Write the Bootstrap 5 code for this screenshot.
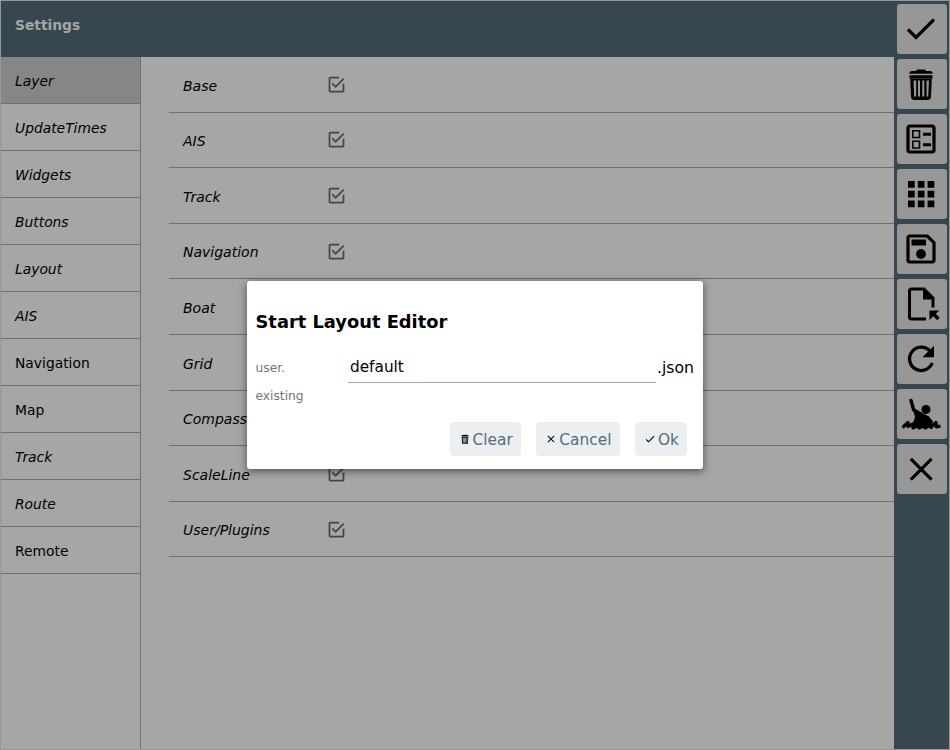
<!DOCTYPE html>
<html lang="en">
<head>
<meta charset="utf-8">
<title>Settings</title>
<meta name="viewport" content="width=device-width, initial-scale=1">
<link href="https://cdn.jsdelivr.net/npm/bootstrap@5.3.0/dist/css/bootstrap.min.css" rel="stylesheet">
<style>
body{font-family:"DejaVu Sans",sans-serif;font-size:14px;line-height:20px;color:#000;background:#979797}
.app{height:750px;padding:1px}
.bar{height:56px;background:#37474f;color:#a6a6a6;padding:14px;font-size:13.800px}
.main-col{background:#a6a6a6}
.side{width:140px;border-right:1px solid #6f6f6f;font-size:13.850px}
.side a{height:47px;padding:2px 14px 0;border-bottom:1px solid #6f6f6f;color:#000;text-decoration:none}
.side a.current{background:#868686}
.layers{margin-left:28px}
.layer-row{height:55.6px;border-bottom:1px solid #6f6f6f;padding-left:14px}
.layer-row span{width:143px;padding-top:2.500px}
.layer-row svg{width:21px;height:21px;fill:#454545}
.tools{width:55px;background:#37474f;padding:3px 2px 0 3px;gap:5px}
.tools button{width:50px;height:50px;border:0;border-radius:3px;background:#979797;padding:0 2px 1px 0}
.tools svg{width:40px;height:40px;display:block;margin:auto}
.ico{fill:#000}
.shade{z-index:5}
.dlg{width:456px;height:188px;background:#fff;border-radius:3px;box-shadow:0 2px 8px rgba(0,0,0,.55);padding:28px 8.500px 0}
.dlg h3{font-size:17.850px;line-height:26px;margin:0 0 19px}
.lbl{font-size:12.25px;color:#757575;width:92.500px}
.row-name .lbl,.row-name .big{margin-top:-1px}
.name-in{width:308px;height:29px;border:0;border-bottom:1px solid #a6a6a6;border-radius:0;padding:0 2px 3px;font-size:15.300px;color:#000;outline:0}
.big{font-size:15.700px;padding-left:1px}
.existing{margin-top:3px}
.actions{gap:15px;padding-right:7.500px;margin-top:16px}
.act{height:34px;border:0;border-radius:4px;background:#eceff1;color:#546e7a;font-size:15.400px;padding:2px 8px 0 9px}
.act.wide{padding-right:8.500px}
.act svg{width:12px;height:12px;margin:0 2px 2px 0}
</style>
<script src="https://cdn.jsdelivr.net/npm/bootstrap@5.3.0/dist/js/bootstrap.bundle.min.js"></script>
</head>
<body>
<svg class="d-none">
<symbol id="check" viewBox="0 0 24 24"><path d="M9 16.2 4.8 12l-1.4 1.4L9 19 21 7l-1.4-1.4z"/></symbol>
<symbol id="close" viewBox="0 0 24 24"><path d="M19 6.4 17.6 5 12 10.6 6.4 5 5 6.4 10.6 12 5 17.6 6.4 19 12 13.4 17.6 19 19 17.6 13.4 12z"/></symbol>
<symbol id="trash" viewBox="0 0 40 40"><path d="M8.500 9.800V8l2-1h4.500l1-1.500h8l1 1.500h4.500l2 1v1.800zM8.500 11.300h23v3.200h-23z"/><path fill-rule="evenodd" d="M9.200 14.500h21.600l-.8 18.500q-.3 3-3.300 3H13.300q-3 0-3.300-3zM12.500 16.500l.7 16h2v-16zM17 16.500v16h2v-16zM21.300 16.500v16h2v-16zM25.600 16.500v16h1.600l.7-16z"/></symbol>
<symbol id="box" viewBox="0 0 24 24"><path d="M19 19H5V5h10V3H5c-1.100 0-2 .9-2 2v14c0 1.100.9 2 2 2h14c1.100 0 2-.9 2-2v-8h-2zM7.900 10.100 6.500 11.500 11 16 21 6l-1.400-1.400L11 13.200z"/></symbol>
</svg>
<div class="app d-flex position-relative">
  <div class="main-col d-flex flex-column flex-grow-1">
    <header class="bar fw-bold">Settings</header>
    <div class="d-flex flex-grow-1">
      <nav class="side d-flex flex-column fst-italic">
        <a class="current d-flex align-items-center">Layer</a>
        <a class="d-flex align-items-center">UpdateTimes</a>
        <a class="d-flex align-items-center">Widgets</a>
        <a class="d-flex align-items-center">Buttons</a>
        <a class="d-flex align-items-center">Layout</a>
        <a class="d-flex align-items-center">AIS</a>
        <a class="d-flex align-items-center fst-normal">Navigation</a>
        <a class="d-flex align-items-center fst-normal">Map</a>
        <a class="d-flex align-items-center">Track</a>
        <a class="d-flex align-items-center">Route</a>
        <a class="d-flex align-items-center fst-normal">Remote</a>
      </nav>
      <div class="layers flex-grow-1 fst-italic">
        <div class="layer-row d-flex align-items-center"><span>Base</span><svg><use href="#box"/></svg></div>
        <div class="layer-row d-flex align-items-center"><span>AIS</span><svg><use href="#box"/></svg></div>
        <div class="layer-row d-flex align-items-center"><span>Track</span><svg><use href="#box"/></svg></div>
        <div class="layer-row d-flex align-items-center"><span>Navigation</span><svg><use href="#box"/></svg></div>
        <div class="layer-row d-flex align-items-center"><span>Boat</span><svg><use href="#box"/></svg></div>
        <div class="layer-row d-flex align-items-center"><span>Grid</span><svg><use href="#box"/></svg></div>
        <div class="layer-row d-flex align-items-center"><span>Compass</span><svg><use href="#box"/></svg></div>
        <div class="layer-row d-flex align-items-center"><span>ScaleLine</span><svg><use href="#box"/></svg></div>
        <div class="layer-row d-flex align-items-center"><span>User/Plugins</span><svg><use href="#box"/></svg></div>
      </div>
    </div>
  </div>
  <aside class="tools d-flex flex-column">
    <button aria-label="Ok"><svg viewBox="0 0 40 40"><path d="M7 20.500 15 28.500 33 10.500" fill="none" stroke="#000" stroke-width="3.200"/></svg></button>
    <button aria-label="Delete"><svg class="ico"><use href="#trash"/></svg></button>
    <button aria-label="List"><svg viewBox="0 0 40 40" fill="none" stroke="#000"><rect x="7" y="7" width="26" height="26" rx="2" stroke-width="3.200"/><path d="M11.800 11.800h6.700v6.700h-6.700zM11.800 22.300h6.700v6.700h-6.700z" stroke-width="1.600"/><path d="M22 15.200h8M22 25.700h8" stroke-width="3"/></svg></button>
    <button aria-label="Grid"><svg class="ico" viewBox="0 0 40 40"><path d="M7 7h6.700v6.700H7zM16.800 7h6.700v6.700h-6.700zM26.600 7h6.700v6.700h-6.700zM7 16.800h6.700v6.700H7zM16.800 16.800h6.700v6.700h-6.700zM26.600 16.800h6.700v6.700h-6.700zM7 26.600h6.700v6.700H7zM16.800 26.600h6.700v6.700h-6.700zM26.600 26.600h6.700v6.700h-6.700z"/></svg></button>
    <button aria-label="Save"><svg viewBox="0 0 40 40"><path d="M9 7h17.300l6.700 6.700V31q0 2-2 2H9q-2 0-2-2V9q0-2 2-2z" fill="none" stroke="#000" stroke-width="3.200"/><path d="M10.500 10.500H25v6H10.500z"/><circle cx="20" cy="25" r="4.900"/></svg></button>
    <button aria-label="Load"><svg viewBox="0 0 40 40"><path d="M25 35H10.500q-2 0-2-2V7q0-2 2-2H23l9 9v9.500" fill="none" stroke="#000" stroke-width="3"/><path d="M22 5v10.500H32.500zM28.500 26.500h9.700l-3.400 3.200 3.900 4-2.400 2.500-4-4-3.800 3.800z"/></svg></button>
    <button aria-label="Reload"><svg viewBox="0 0 40 40"><path d="M28.700 11.700A11.700 11.700 0 1 0 31.200 24" fill="none" stroke="#000" stroke-width="3.300"/><path d="M33 6.700V18.300H21.400z"/></svg></button>
    <button aria-label="Man overboard"><svg viewBox="0 0 40 40"><circle cx="25" cy="15.500" r="4.500"/><path d="M10 6.500 12.700 16 20 20" fill="none" stroke="#000" stroke-width="3.400" stroke-linecap="round" stroke-linejoin="round"/><path d="M12.500 17.500 19 18l9 4.500 4 5-1 4-20 .5 3-9z"/><path d="M1.500 33.500 7 28.500v4l5-2.500v4l6-3v3l6-3v3l5.500-3 .5 2.500 5-5 .5 4.500 4-1" fill="none" stroke="#000" stroke-width="3.200" stroke-linejoin="round"/></svg></button>
    <button aria-label="Close"><svg viewBox="0 0 40 40"><path d="M9.800 9.800l20.800 20.800M30.600 9.800 9.800 30.600" stroke="#000" stroke-width="3.200"/></svg></button>
  </aside>
  <div class="shade position-absolute top-0 start-0 w-100 h-100 d-flex align-items-center justify-content-center">
    <div class="dlg" role="dialog">
      <h3 class="fw-bold">Start Layout Editor</h3>
      <div class="row-name d-flex align-items-center">
        <label class="lbl">user.</label><input class="name-in" value="default"><span class="big">.json</span>
      </div>
      <div class="lbl existing">existing</div>
      <div class="actions d-flex justify-content-end">
        <button class="act wide d-flex align-items-center"><svg class="ico"><use href="#trash"/></svg>Clear</button>
        <button class="act wide d-flex align-items-center"><svg class="ico"><use href="#close"/></svg>Cancel</button>
        <button class="act d-flex align-items-center"><svg class="ico"><use href="#check"/></svg>Ok</button>
      </div>
    </div>
  </div>
</div>
</body>
</html>
